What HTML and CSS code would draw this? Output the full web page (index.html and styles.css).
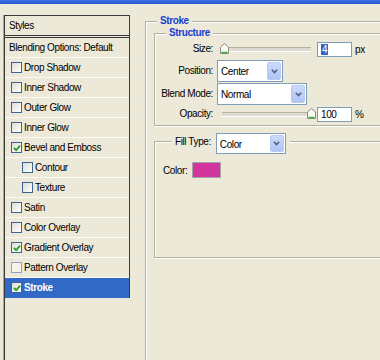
FILE: index.html
```html
<!DOCTYPE html>
<html lang="en">
<head>
    <meta charset="UTF-8">
    <title>Layer Style - Stroke</title>
    <link rel="stylesheet" href="styles.css">
</head>
<body>
    <div class="titlebar"></div>
    <div class="dialog">
        <aside class="styles">
            <div class="list">
                <div class="head">Styles</div>
                <div class="row plain">Blending Options: Default</div>
                <div class="row"><span class="box"></span>Drop Shadow</div>
                <div class="row"><span class="box"></span>Inner Shadow</div>
                <div class="row"><span class="box"></span>Outer Glow</div>
                <div class="row"><span class="box"></span>Inner Glow</div>
                <div class="row"><span class="box"><svg viewBox="0 0 8 8"><path d="M1 4 L3.2 6.2 L7 1.6"/></svg></span>Bevel and Emboss</div>
                <div class="row sub"><span class="box"></span>Contour</div>
                <div class="row sub"><span class="box"></span>Texture</div>
                <div class="row"><span class="box"></span>Satin</div>
                <div class="row"><span class="box"></span>Color Overlay</div>
                <div class="row"><span class="box"><svg viewBox="0 0 8 8"><path d="M1 4 L3.2 6.2 L7 1.6"/></svg></span>Gradient Overlay</div>
                <div class="row"><span class="box faint"></span>Pattern Overlay</div>
                <div class="row selected"><span class="box"><svg viewBox="0 0 8 8"><path d="M1 4 L3.2 6.2 L7 1.6"/></svg></span>Stroke</div>
            </div>
        </aside>

        <main class="options">
            <fieldset class="group stroke">
                <legend>Stroke</legend>

                <fieldset class="group structure">
                    <legend>Structure</legend>
                    <div class="field size">
                        <label>Size:</label>
                        <div class="slider"><span class="thumb"><svg viewBox="0 0 9 11"><path class="knob" d="M0.5 10.5 V4 L4.5 0.5 L8.5 4 V10.5 Z"/><path class="grip" d="M1.5 9.5 H7.5"/></svg></span></div>
                        <div class="num"><span class="sel">4</span></div>
                        <span class="unit">px</span>
                    </div>
                    <div class="field position">
                        <label>Position:</label>
                        <div class="select w-pos"><span class="val">Center</span><span class="btn"><svg viewBox="0 0 7 5"><path d="M0.8 0.8 L3.5 3.6 L6.2 0.8"/></svg></span></div>
                    </div>
                    <div class="field blend">
                        <label>Blend Mode:</label>
                        <div class="select w-blend"><span class="val">Normal</span><span class="btn"><svg viewBox="0 0 7 5"><path d="M0.8 0.8 L3.5 3.6 L6.2 0.8"/></svg></span></div>
                    </div>
                    <div class="field opacity">
                        <label>Opacity:</label>
                        <div class="slider"><span class="thumb end"><svg viewBox="0 0 9 11"><path class="knob" d="M0.5 10.5 V4 L4.5 0.5 L8.5 4 V10.5 Z"/><path class="grip" d="M1.5 9.5 H7.5"/></svg></span></div>
                        <div class="num">100</div>
                        <span class="unit">%</span>
                    </div>
                </fieldset>

                <fieldset class="group fill">
                    <legend>
                        <span class="fill-label">Fill Type:</span>
                        <span class="select w-fill"><span class="val">Color</span><span class="btn"><svg viewBox="0 0 7 5"><path d="M0.8 0.8 L3.5 3.6 L6.2 0.8"/></svg></span></span>
                    </legend>
                    <div class="color-row">
                        <span>Color:</span>
                        <span class="swatch"></span>
                    </div>
                </fieldset>
            </fieldset>
        </main>
    </div>
</body>
</html>
```

FILE: styles.css
```css
* {
    box-sizing: border-box;
}
html, body {
    margin: 0;
    height: 100%;
}
body {
    background-color: #ece9d8;
    font-family: "Liberation Sans", Arial, sans-serif;
    font-size: 10px;
    letter-spacing: -0.4px;
    color: #000;
    overflow: hidden;
}
.titlebar {
    height: 4px;
    background: linear-gradient(#3b70e2, #2458d2);
}
.dialog {
    display: flex;
    height: 356px;
}

/* left styles list */
.styles {
    flex: none;
    width: 126px;
    margin: 11px 0 0 4px;
    border-left: 1px solid #3a3a3a;
    box-shadow: -1px 0 0 #aaa796;
}
.list {
    border-top: 1px solid #3a3a3a;
    border-right: 1px solid #3a3a3a;
}
.head {
    height: 22px;
    line-height: 19px;
    padding-left: 4px;
    border-bottom: 3px double #3a3a3a;
}
.row {
    display: flex;
    align-items: center;
    gap: 2px;
    height: 20px;
    padding-left: 6px;
    border-bottom: 1px solid #fbfaf4;
}
.row.plain {
    padding-left: 4px;
}
.row.sub {
    padding-left: 17px;
}
.row.selected {
    background-color: #316ac5;
    border-bottom-color: #316ac5;
    color: #fff;
    font-weight: bold;
}
.box {
    display: flex;
    align-items: center;
    justify-content: center;
    width: 11px;
    height: 11px;
    border: 1px solid #3d6296;
    background: linear-gradient(135deg, #dedcd4, #fff);
}
.box.faint {
    border-color: #8ea3c2;
    background: #f4f3ee;
}
.box svg {
    width: 8px;
    height: 8px;
}
.box path {
    fill: none;
    stroke: #21a121;
    stroke-width: 1.8;
}

/* right options, groups run off the right and bottom edge */
.options {
    flex: 1;
    min-width: 0;
    margin: 11px 0 0 15px;
}
.group {
    margin: 0;
    padding: 0;
    min-width: 0;
    border: 1px solid #b3b09f;
    border-right: none;
    box-shadow: inset 1px 1px 0 #fff, 1px 1px 0 #fff;
}
.group > legend {
    padding: 0 3px;
    line-height: 12px;
    background-color: #ece9d8;
    color: #1a3fd0;
    font-weight: bold;
}
.stroke {
    height: 345px;
    border-bottom: none;
}
.stroke > legend {
    margin-left: 11px;
}
.structure {
    margin-left: 8px;
    padding-bottom: 3px;
}
.structure > legend {
    margin-left: 11px;
}
.field {
    display: flex;
    align-items: center;
}
.field label {
    flex: none;
    width: 58px;
    margin-right: 4px;
    padding-bottom: 2px;
    text-align: right;
}
.field.size {
    height: 16px;
    margin-top: 2px;
}
.field.position {
    margin-top: 3px;
}
.field.blend {
    margin-top: 1px;
}
.field.opacity {
    height: 16px;
    margin-top: 1px;
}

.slider {
    position: relative;
    flex: none;
    width: 96px;
    height: 16px;
    margin-left: 3px;
}
.slider::before {
    content: "";
    position: absolute;
    left: 2px;
    right: 5px;
    top: 6px;
    height: 3px;
    border-top: 1px solid #b5b2a1;
    border-bottom: 1px solid #fff;
    background-color: #dddbcf;
}
.thumb {
    position: absolute;
    left: 0;
    top: 2px;
    width: 9px;
    height: 11px;
}
.thumb.end {
    left: auto;
    right: 0;
}
.thumb svg {
    display: block;
    width: 9px;
    height: 11px;
}
.thumb .knob {
    fill: #f8f8f4;
    stroke: #8a8a80;
}
.thumb .grip {
    stroke: #2fb52f;
    stroke-width: 1.4;
}
.num {
    flex: none;
    width: 35px;
    height: 15px;
    margin-left: 1px;
    padding-left: 3px;
    border: 1px solid #7f9db9;
    background-color: #fff;
    line-height: 13px;
}
.num .sel {
    padding: 0 1px;
    background-color: #316ac5;
    color: #fff;
}
.unit {
    margin-left: 3px;
}

.select {
    display: flex;
    flex: none;
    height: 22px;
    padding: 1px;
    border: 1px solid #7f9db9;
    background-color: #fff;
    color: #000;
    font-weight: normal;
}
.select .val {
    flex: 1;
    padding-left: 2px;
    line-height: 19px;
}
.select .btn {
    display: flex;
    align-items: center;
    justify-content: center;
    width: 14px;
    border: 1px solid #b9cbf3;
    border-radius: 2px;
    background: linear-gradient(#cbdafc, #b0c4f3);
}
.select .btn svg {
    width: 7px;
    height: 5px;
}
.select .btn path {
    fill: none;
    stroke: #4d6185;
    stroke-width: 1.6;
}
.w-pos {
    width: 66px;
}
.w-blend {
    width: 90px;
}
.w-fill {
    width: 70px;
    height: 21px;
    margin-left: 5px;
}

.fill {
    margin: 2px 0 0 8px;
    padding: 0 0 79px 8px;
}
.fill > legend {
    display: flex;
    align-items: center;
    margin-left: 9px;
    padding: 5px 4px 0 3px;
    color: #000;
    font-weight: normal;
}
.fill-label {
    padding-bottom: 3px;
}
.color-row {
    display: flex;
    align-items: center;
    margin-top: 8px;
}
.swatch {
    width: 29px;
    height: 16px;
    margin-left: 5px;
    border: 1px solid #a4a4a4;
    background-color: #d3359e;
}
```
